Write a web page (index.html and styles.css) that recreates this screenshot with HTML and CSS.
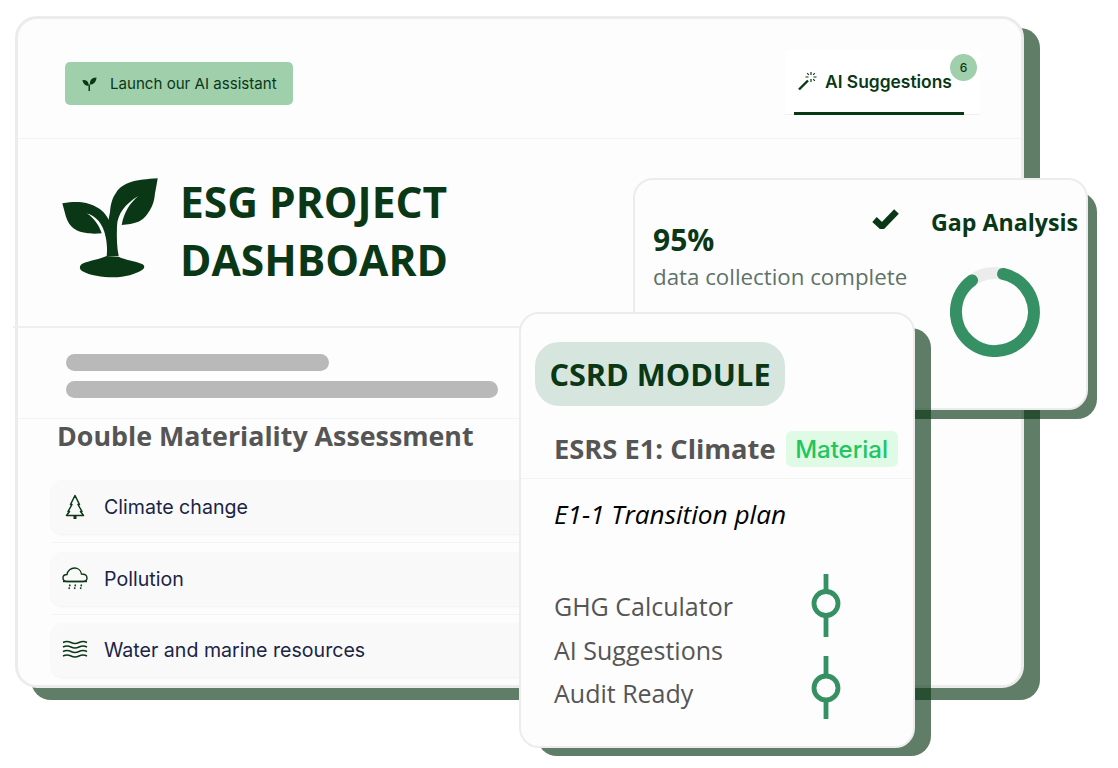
FILE: index.html
```html
<!DOCTYPE html>
<html lang="en">
<head>
<meta charset="utf-8">
<title>ESG Project Dashboard</title>
<link rel="stylesheet" href="styles.css">
</head>
<body>
<div class="stage">
  <div class="backdrop backdrop-main"></div>
  <section class="window main">
    <header class="top">
      <div class="cta">
        <svg class="cta-icon" viewBox="0 0 16 16"><path d="M15.500 1C11.500 1.200 9 2.600 8.500 6.500 8.400 7.200 8.400 8 8.400 8.600 12.500 8.600 15 6 15.500 1Z"/><path d="M.5 3.800C4 3.600 6.600 4.600 7.100 8.600 7.100 9 7 9.500 7 9.900 3.500 9.900 1.200 8 .5 3.800Z"/><path d="M6.900 15.500V8.500h1.600v7Z"/></svg>
        <span>Launch our AI assistant</span>
      </div>
      <div class="tab">
        <svg class="wand" viewBox="0 0 20 20" fill="none"><path d="M1 18.500 10 9.500" stroke-width="2.400"/><path d="M13 1v3M13 8v3M7.500 6h3M15.500 6h3M9.200 2.200l1.600 1.600M15.200 8.200l1.600 1.600M16.800 2.200l-1.600 1.600" stroke-width="1.200"/></svg>
        <span>AI Suggestions</span>
        <b class="count">6</b>
      </div>
    </header>
    <div class="brand">
      <svg class="logo" viewBox="60 176 104 104">
        <path d="M62.300 203.300C70 202 76 201.500 81.700 202.300 88 203 93 205 96.700 207.300 102 210 106 214 110 222L110 240 105.500 236C103 224 96 216 86.700 213.300 94 218 99 225 101.700 233.300 94 234 88 233.500 85 232.700 78 231.500 74 229 71.700 226.700 68 223 66 218 65 213.300Z"/>
        <path d="M157.700 178.300C147 179 138 180 131.700 181.700 124 184 119 188 116.700 191.700 112 198 110.500 205 110 212L105.500 236C107 243 107.500 250 106.700 256L118.700 256C117 248 116.500 238 117 226 117.500 214 125 204 138.300 196 130 203 124 212 121.700 225 128 224.500 133 223.500 138.300 221.700 144 219 147 215 150 210 153 205 154.500 200 155 193.300 156 188 157 183 157.700 178.300Z"/>
        <path d="M106.700 256C100 259 90 260.500 83.300 263.300 79 265 79 269 82 271 90 275.500 102 277.300 113.300 277.300 125 277.300 136 274 142 270 145 268 145 265.500 142 264 135 261 125 260 118.700 256.700Z"/>
      </svg>
      <h1>ESG PROJECT<br>DASHBOARD</h1>
    </div>
    <div class="bars">
      <div class="bar bar-short"></div>
      <div class="bar bar-long"></div>
    </div>
    <h2 class="assess">Double Materiality Assessment</h2>
    <ul class="topics">
      <li class="topic">
        <svg class="topic-icon" viewBox="0 0 26 26" fill="none"><path d="M13 1.500 8.500 10.500H10L6 17.500H7.500L4.500 21.500H21.500L18.500 17.500H20L16 10.500H17.500Z" stroke-width="1.500" stroke-linejoin="round"/><path d="M13 21.500V25" stroke-width="3"/></svg>
        <span>Climate change</span>
      </li>
      <li class="topic">
        <svg class="topic-icon" viewBox="0 0 26 26" fill="none"><path d="M5 15.500C2.500 15.500 1 14 1 12 1 10 2.500 8.500 5 8.500 5.500 4.500 9 2 12.500 2 16 2 19 4.500 19.500 8 22.500 8 25 9.500 25 12 25 14 23.500 15.500 21 15.500Z" stroke-width="1.400"/><path d="M1 15.500H25" stroke-width="1.400"/><path d="M8 18.500 7 23M13.500 18.500 12.500 23M19.500 18.500 18.500 23" stroke-width="1.500" stroke-dasharray="2 1"/></svg>
        <span>Pollution</span>
      </li>
      <li class="topic">
        <svg class="topic-icon" viewBox="0 0 26 26" fill="none"><path d="M1 5.500C4 4 6 4 9 5.500S14 7 17 5.500 22 4 25 5.500M1 10C4 8.500 6 8.500 9 10S14 11.500 17 10 22 8.500 25 10M1 14.500C4 13 6 13 9 14.500S14 16 17 14.500 22 13 25 14.500M1 19C4 17.500 6 17.500 9 19S14 20.500 17 19 22 17.500 25 19" stroke-width="1.400"/></svg>
        <span>Water and marine resources</span>
      </li>
    </ul>
  </section>

  <div class="backdrop backdrop-gap"></div>
  <section class="window gap-card">
    <div class="progress">
      <svg class="check" viewBox="0 0 27 20" fill="none"><path d="M2.500 10.500 10 17.500 24.500 2.500" stroke-width="6.500"/></svg>
      <div class="pct">95%</div>
      <div class="pct-label">data collection complete</div>
    </div>
    <div class="gap-side">
      <h3>Gap Analysis</h3>
      <svg class="donut" viewBox="0 0 90 90" fill="none"><circle cx="45" cy="45" r="39" class="donut-track"/><path d="M53.100 6.900A39 39 0 1 1 22.100 13.400" class="donut-arc"/></svg>
    </div>
  </section>

  <div class="backdrop backdrop-csrd"></div>
  <section class="window csrd">
    <div class="pill">CSRD MODULE</div>
    <div class="esrs">
      <h3>ESRS E1: Climate</h3>
      <span class="badge">Material</span>
    </div>
    <p class="plan">E1-1 Transition plan</p>
    <div class="checks">
      <ul class="items">
        <li>GHG Calculator</li>
        <li>AI Suggestions</li>
        <li>Audit Ready</li>
      </ul>
      <div class="nodes">
        <svg class="node" viewBox="0 0 30 63" fill="none"><path d="M15 0V17M15 43V63"/><circle cx="15" cy="29.500" r="12"/></svg>
        <svg class="node" viewBox="0 0 30 63" fill="none"><path d="M15 0V19M15 45V63"/><circle cx="15" cy="32" r="12"/></svg>
      </div>
    </div>
  </section>
</div>
</body>
</html>
```

FILE: styles.css
```css
* { box-sizing: border-box; }
html, body { margin: 0; padding: 0; background: #fff; }
body { font-family: "Open Sans", sans-serif; }
h1, h2, h3, p, ul { margin: 0; padding: 0; }
ul { list-style: none; }

.stage { position: relative; width: 1118px; height: 768px; overflow: hidden; }

.backdrop { position: absolute; background: rgba(10, 56, 22, .65); border-radius: 20px; }
.backdrop-main { left: 31px; top: 28px; width: 1009px; height: 672px; }
.backdrop-gap { left: 650px; top: 192px; width: 447px; height: 227px; }
.backdrop-csrd { left: 537px; top: 328px; width: 394px; height: 428px; }

.window { position: absolute; background: #fdfdfd; }
.main { left: 15px; top: 16px; width: 1009px; height: 672px; border: 3px solid #ececec; border-radius: 22px; }

.top { height: 120px; display: flex; justify-content: space-between; align-items: flex-start; padding: 31px 41px 0 47px; border-bottom: 1px solid #f3f3f3; }
.cta { margin-top: 12px; width: 228px; height: 43px; background: #a0cfac; border-radius: 5px; display: flex; align-items: center; gap: 13px; padding-left: 17px; color: #0a3816; font: 400 15.100px "Inter", sans-serif; }
.cta-icon { width: 15px; height: 16px; fill: #0a3816; }
.tab { position: relative; width: 195px; height: 65px; background: #fff; border-bottom: 1px solid #f0f0f0; display: flex; align-items: center; padding: 0 0 2px 13px; gap: 7px; color: #0a3816; font: 600 17.400px "Inter", sans-serif; }
.tab::after { content: ""; position: absolute; left: 9px; bottom: -1px; width: 170px; height: 3px; background: #0a3816; }
.wand { width: 20px; height: 20px; stroke: #0a3816; }
.count { position: absolute; left: 165px; top: 4px; width: 27px; height: 27px; border-radius: 50%; background: #a0cfac; display: flex; align-items: center; justify-content: center; font: 500 12px "Inter", sans-serif; }

.brand { height: 189px; display: flex; align-items: flex-start; gap: 16px; margin-left: -5px; padding: 37px 0 0 47px; border-bottom: 2px solid #efefef; }
.logo { width: 104px; height: 104px; fill: #0a3816; flex: none; }
h1 { margin-top: -3px; font-size: 42.500px; line-height: 58px; font-weight: 700; color: #0a3816; }

.bars { height: 91px; padding: 26px 0 0 48px; display: flex; flex-direction: column; gap: 10px; border-bottom: 1px solid #f3f3f3; }
.bar { height: 17px; border-radius: 9px; background: #b9b9b9; }
.bar-short { width: 263px; }
.bar-long { width: 432px; }

.assess { margin: 0 0 0 39px; font-size: 26.800px; line-height: 34px; font-weight: 700; color: #555; }
.topics { margin: 27px 0 0 33px; display: flex; flex-direction: column; }
.topic { width: 490px; height: 54px; display: flex; align-items: center; gap: 16px; padding-left: 11px; margin-bottom: 17.500px; background: #f9f9f9; border-radius: 12px; box-shadow: 0 1px 3px rgba(0, 0, 0, .05); color: #1a2447; font: 400 19.600px "Inter", sans-serif; position: relative; }
.topic::after { content: ""; position: absolute; left: 0; right: 0; bottom: -9px; height: 1px; background: #f3f3f3; }
.topic:last-child::after { display: none; }
.topic-icon { width: 26px; height: 26px; stroke: #0a3816; flex: none; }

.gap-card { left: 633px; top: 178px; width: 455px; height: 232px; border: 2px solid #ececec; border-radius: 20px; display: flex; padding: 0 0 0 18px; }
.progress { width: 278px; padding-top: 41px; position: relative; }
.check { position: absolute; left: 219px; top: 29px; width: 27px; height: 20px; stroke: #0a3816; }
.pct { font-size: 30px; line-height: 38px; font-weight: 700; color: #0a3816; }
.pct-label { font-size: 22.300px; line-height: 36px; color: #5f7268; white-space: nowrap; }
.gap-side { padding-top: 25px; }
.gap-side h3 { font-size: 23.200px; line-height: 34px; font-weight: 700; color: #0a3816; white-space: nowrap; }
.donut { display: block; width: 90px; height: 90px; margin: 28px 0 0 19px; stroke-width: 12; }
.donut-track { stroke: #ececec; }
.donut-arc { stroke: #359064; stroke-linecap: round; }

.csrd { left: 519px; top: 312px; width: 396px; height: 436px; border: 2px solid #ececec; border-radius: 20px; padding-top: 28px; }
.pill { margin-left: 14px; width: 250px; height: 64px; background: #d6e6df; border-radius: 24px; display: flex; align-items: center; justify-content: center; font-size: 30.700px; font-weight: 700; color: #0a3816; }
.esrs { height: 73px; display: flex; align-items: flex-start; padding: 25px 0 0 33px; gap: 10px; border-bottom: 1px solid #f3f3f3; }
.esrs h3 { font-size: 27.300px; line-height: 36px; font-weight: 700; color: #555; white-space: nowrap; }
.badge { width: 112px; height: 36px; background: #dffbe6; border-radius: 6px; display: flex; align-items: center; justify-content: center; font: 500 24px "Inter", sans-serif; color: #22c55e; }
.plan { margin: 17px 0 0 33px; font-size: 26.200px; line-height: 36px; font-style: italic; color: #000; }
.checks { display: flex; margin-top: 42px; }
.items { width: 290px; padding: 11px 0 0 33px; font-size: 25px; line-height: 43.500px; color: #555; }
.nodes { display: flex; flex-direction: column; gap: 19px; }
.node { display: block; width: 30px; height: 63px; stroke: #359064; stroke-width: 4.800px; }
```
